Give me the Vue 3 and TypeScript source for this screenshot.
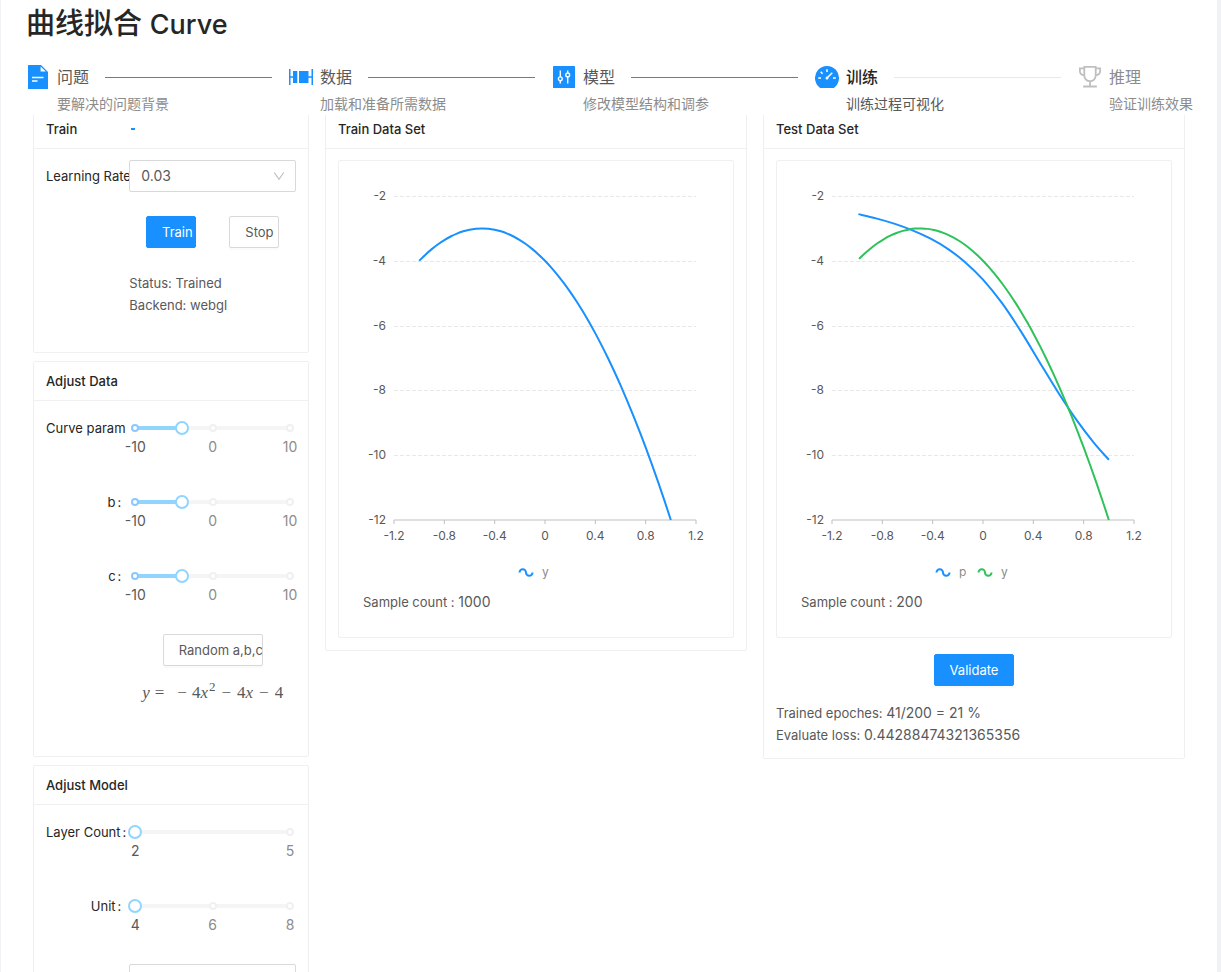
<script setup lang="ts">
import { ref } from 'vue'

type StepState = 'done' | 'active' | 'wait'
interface Step { icon: string; title: string; desc: string; state: StepState }
interface Mark { value: number; label: string }
interface SliderDef { id: string; label: string; min: number; max: number; value: number; colon: boolean; marks: Mark[] }
type Point = [number, number]
interface Series { name: string; color: string; path: string }

const steps: Step[] = [
  { icon: 'file', title: '问题', desc: '要解决的问题背景', state: 'done' },
  { icon: 'data', title: '数据', desc: '加载和准备所需数据', state: 'done' },
  { icon: 'model', title: '模型', desc: '修改模型结构和调参', state: 'done' },
  { icon: 'gauge', title: '训练', desc: '训练过程可视化', state: 'active' },
  { icon: 'trophy', title: '推理', desc: '验证训练效果', state: 'wait' },
]

const learningRate = ref('0.03')
const activation = ref('sigmoid')

const curveMarks: Mark[] = [
  { value: -10, label: '-10' },
  { value: 0, label: '0' },
  { value: 10, label: '10' },
]
const curveSliders = ref<SliderDef[]>([
  { id: 'param-a', label: 'Curve param a', min: -10, max: 10, value: -4, colon: false, marks: curveMarks },
  { id: 'param-b', label: 'b', min: -10, max: 10, value: -4, colon: true, marks: curveMarks },
  { id: 'param-c', label: 'c', min: -10, max: 10, value: -4, colon: true, marks: curveMarks },
])
const modelSliders = ref<SliderDef[]>([
  { id: 'layers', label: 'Layer Count', min: 2, max: 5, value: 2, colon: true, marks: [{ value: 2, label: '2' }, { value: 5, label: '5' }] },
  { id: 'units', label: 'Unit', min: 4, max: 8, value: 4, colon: true, marks: [{ value: 4, label: '4' }, { value: 6, label: '6' }, { value: 8, label: '8' }] },
])
const percent = (s: SliderDef, v: number): string => `${((v - s.min) / (s.max - s.min)) * 100}%`

const X0 = 31
const X1 = 333
const Y0 = 11
const Y1 = 335
const px = (x: number): number => X0 + ((x + 1.2) / 2.4) * (X1 - X0)
const py = (y: number): number => Y0 + ((-2 - y) / 10) * (Y1 - Y0)
const yTicks = [-2, -4, -6, -8, -10, -12]
const xTicks = [-1.2, -0.8, -0.4, 0, 0.4, 0.8, 1.2]

function smooth(pts: Point[]): string {
  let d = `M${pts[0][0]} ${pts[0][1]}`
  for (let i = 0; i < pts.length - 1; i++) {
    const a = pts[Math.max(i - 1, 0)]
    const b = pts[i]
    const c = pts[i + 1]
    const e = pts[Math.min(i + 2, pts.length - 1)]
    d += `C${b[0] + (c[0] - a[0]) / 6} ${b[1] + (c[1] - a[1]) / 6} ${c[0] - (e[0] - b[0]) / 6} ${c[1] - (e[1] - b[1]) / 6} ${c[0]} ${c[1]}`
  }
  return d
}
function quadratic(from: number): string {
  const pts: Point[] = []
  for (let i = 0; i <= 40; i++) {
    const x = from + ((1 - from) * i) / 40
    pts.push([px(x), py(-4 * x * x - 4 * x - 4)])
  }
  return smooth(pts)
}
const predicted: Point[] = [
  [-0.99, -2.56], [-0.85, -2.69], [-0.7, -2.86], [-0.56, -3.06], [-0.42, -3.31], [-0.28, -3.63], [-0.14, -4.05], [0, -4.58],
  [0.15, -5.3], [0.3, -6.17], [0.45, -7.13], [0.6, -8.08], [0.75, -8.95], [0.88, -9.61], [1, -10.14],
]
const trainSeries: Series[] = [{ name: 'y', color: '#1890ff', path: quadratic(-1) }]
const testSeries: Series[] = [
  { name: 'p', color: '#1890ff', path: smooth(predicted.map(([x, y]): Point => [px(x), py(y)])) },
  { name: 'y', color: '#2fc25b', path: quadratic(-0.985) },
]
const charts = [
  { title: 'Train Data Set', series: trainSeries, count: 1000, test: false },
  { title: 'Test Data Set', series: testSeries, count: 200, test: true },
]
</script>

<template>
  <div class="app">
    <main class="page">
      <header class="top">
        <h1>曲线拟合 <span class="latin">Curve</span></h1>
        <ol class="steps">
          <li v-for="s in steps" :key="s.icon" class="step" :class="s.state">
            <svg class="step-icon" viewBox="0 0 24 24" aria-hidden="true">
              <template v-if="s.icon === 'file'">
                <path d="M2 .6Q2 0 2.600 0H15L22 7V23.400Q22 24 21.400 24H2.600Q2 24 2 23.400Z" fill="#1890ff" />
                <path d="M14.600 1.600V6.500H19.800Z" fill="#fff" />
                <path d="M6 12.500H17.500M6 16H11.500" stroke="#fff" stroke-width="1.500" />
              </template>
              <template v-else-if="s.icon === 'data'">
                <path d="M.75 4V20M23.250 4V20M1 12H4.500M19 12H23" stroke="#1890ff" stroke-width="1.500" />
                <path d="M4 6H8.300V18H4ZM10 6H19.500V18H10Z" fill="#1890ff" />
              </template>
              <template v-else-if="s.icon === 'model'">
                <rect x="1" y="1" width="22" height="22" rx=".6" fill="#1890ff" />
                <path d="M8.300 5.500V12M8.300 15.500V18.500M15.700 5.500V8M15.700 11.500V18.500" stroke="#fff" stroke-width="1.400" />
                <circle cx="8.300" cy="13.800" r="1.900" fill="none" stroke="#fff" stroke-width="1.400" />
                <circle cx="15.700" cy="9.900" r="1.900" fill="none" stroke="#fff" stroke-width="1.400" />
              </template>
              <template v-else-if="s.icon === 'gauge'">
                <path d="M4.600 22.400A12 12 0 1 1 19.400 22.400Q18.900 22.900 18.200 22.900H5.800Q5.100 22.900 4.600 22.400Z" fill="#1890ff" />
                <path d="M3.200 13H6M18 13H20.800M5.700 6.800L7.600 8.700M12 4.200V7M12 13L17.300 7.700" stroke="#fff" stroke-width="1.500" />
                <circle cx="12" cy="13" r="1.500" fill="#fff" />
              </template>
              <template v-else>
                <path d="M6.300 1.800H17.700V10.500A5.700 5.700 0 0 1 6.300 10.500ZM6 3.300H1.900V6.500A4 4 0 0 0 6.300 10.200M18 3.300H22.100V6.500A4 4 0 0 1 17.700 10.200M12 16.500V21M5.200 21.500H18.800" fill="none" stroke="#bfbfbf" stroke-width="1.800" />
              </template>
            </svg>
            <div class="step-text">
              <div class="step-title">{{ s.title }}</div>
              <div class="step-desc">{{ s.desc }}</div>
            </div>
          </li>
        </ol>
      </header>

      <div class="content">
        <div class="col side">
          <section class="card">
            <h2 class="card-head">Train<span class="ink"></span></h2>
            <div class="card-body">
              <div class="item">
                <label class="label" for="rate">Learning Rate</label>
                <div class="select">
                  <select id="rate" v-model="learningRate">
                    <option>0.01</option>
                    <option>0.03</option>
                    <option>0.1</option>
                  </select>
                  <svg viewBox="0 0 12 12" aria-hidden="true"><path d="M1.200 2.500L6 9.300L10.800 2.500" fill="none" stroke="#bfbfbf" stroke-width="1.200" /></svg>
                </div>
              </div>
              <div class="item">
                <div class="control pair">
                  <button type="button" class="btn primary short">Train</button>
                  <button type="button" class="btn short">Stop</button>
                </div>
              </div>
              <div class="item">
                <div class="control">
                  <div>Status: Trained</div>
                  <div>Backend: webgl</div>
                </div>
              </div>
            </div>
          </section>

          <section class="card">
            <h2 class="card-head">Adjust Data</h2>
            <div class="card-body">
              <div v-for="s in curveSliders" :key="s.id" class="item">
                <label class="label" :for="s.id">{{ s.label }}<span v-if="s.colon" class="colon">:</span></label>
                <div class="slider">
                  <div class="rail">
                    <div class="track" :style="{ width: percent(s, s.value) }"></div>
                    <span v-for="m in s.marks" :key="m.value" class="dot" :class="{ on: m.value <= s.value }" :style="{ left: percent(s, m.value) }"></span>
                    <input :id="s.id" v-model.number="s.value" type="range" :min="s.min" :max="s.max" />
                    <span v-for="m in s.marks" :key="m.label" class="mark" :class="{ on: m.value <= s.value }" :style="{ left: percent(s, m.value) }">{{ m.label }}</span>
                  </div>
                </div>
              </div>
              <div class="item">
                <div class="control centered">
                  <button type="button" class="btn random">Random a,b,c</button>
                  <div class="formula"><i>y</i><span class="rel">=</span><span class="neg">−</span>4<i>x</i><sup>2</sup><span class="op">−</span>4<i>x</i><span class="op">−</span>4</div>
                </div>
              </div>
            </div>
          </section>

          <section class="card">
            <h2 class="card-head">Adjust Model</h2>
            <div class="card-body">
              <div v-for="s in modelSliders" :key="s.id" class="item">
                <label class="label" :for="s.id">{{ s.label }}<span class="colon">:</span></label>
                <div class="slider">
                  <div class="rail">
                    <div class="track" :style="{ width: percent(s, s.value) }"></div>
                    <span v-for="m in s.marks" :key="m.value" class="dot" :class="{ on: m.value <= s.value }" :style="{ left: percent(s, m.value) }"></span>
                    <input :id="s.id" v-model.number="s.value" type="range" :min="s.min" :max="s.max" />
                    <span v-for="m in s.marks" :key="m.label" class="mark" :class="{ on: m.value <= s.value }" :style="{ left: percent(s, m.value) }">{{ m.label }}</span>
                  </div>
                </div>
              </div>
              <div class="item">
                <div class="select control">
                  <select v-model="activation" aria-label="Activation">
                    <option>sigmoid</option>
                    <option>relu</option>
                  </select>
                </div>
              </div>
            </div>
          </section>
        </div>

        <div v-for="c in charts" :key="c.title" class="col wide">
          <section class="card">
            <h2 class="card-head">{{ c.title }}</h2>
            <div class="card-body">
              <div class="inner">
                <svg class="chart" viewBox="0 0 346 406" role="img" :aria-label="c.title">
                  <g v-for="t in yTicks" :key="t">
                    <line v-if="t > -12" :x1="X0" :x2="X1" :y1="Math.round(py(t)) + 0.5" :y2="Math.round(py(t)) + 0.5" stroke="#e8e8e8" stroke-dasharray="4 2" />
                    <text :x="X0 - 8" :y="py(t) + 4" text-anchor="end">{{ t }}</text>
                  </g>
                  <line :x1="X0" :x2="X1" :y1="Y1" :y2="Y1" stroke="#bfbfbf" />
                  <g v-for="t in xTicks" :key="t">
                    <line :x1="px(t)" :x2="px(t)" :y1="Y1" :y2="Y1 + 4" stroke="#bfbfbf" />
                    <text :x="px(t)" :y="Y1 + 20" text-anchor="middle">{{ t }}</text>
                  </g>
                  <path v-for="s in c.series" :key="s.name" :d="s.path" fill="none" :stroke="s.color" stroke-width="2" />
                  <g v-for="(s, i) in c.series" :key="s.name" :transform="`translate(${163 + (i * 2 - (c.series.length - 1)) * 21} 387)`">
                    <path d="M-6.500 .5A3.200 3.200 0 0 1 0 .5A3.200 3.200 0 0 0 6.500 .5" fill="none" :stroke="s.color" stroke-width="2" />
                    <text class="legend" x="16" y="4">{{ s.name }}</text>
                  </g>
                </svg>
                <div>Sample count : <span class="num">{{ c.count }}</span></div>
              </div>
              <template v-if="c.test">
                <button type="button" class="btn primary validate">Validate</button>
                <div>Trained epoches: <span class="num">41/200 = 21 %</span></div>
                <div>Evaluate loss: <span class="num">0.44288474321365356</span></div>
              </template>
            </div>
          </section>
        </div>
      </div>
    </main>
  </div>
</template>

<style>
body {
  margin: 0;
  background: #f0f2f5;
}
</style>

<style scoped>
* {
  box-sizing: border-box;
}
.app {
  height: 100vh;
  padding: 0 4px 0 1px;
  background: #f0f2f5;
  color: #595959;
  font: 13px/22px Inter, "Noto Sans CJK SC", sans-serif;
}
.page {
  display: flex;
  flex-direction: column;
  height: 100%;
  background: #fff;
}
.top {
  position: relative;
  z-index: 1;
  flex: none;
  padding: 4px 24px 0 25px;
  background: #fff;
}
h1 {
  height: 40px;
  margin: 0 0 17px;
  color: #262626;
  font-size: 29px;
  font-weight: 500;
  line-height: 40px;
}
.latin {
  font-size: 27px;
}
.steps {
  display: flex;
  margin: 0;
  padding: 0;
  list-style: none;
}
.step {
  display: flex;
  flex: 1;
  min-width: 0;
  gap: 7px;
}
.step:last-child {
  flex: none;
}
.step-icon {
  flex: none;
  width: 24px;
  height: 24px;
  margin-top: 4px;
}
.step-text {
  flex: 1;
  min-width: 0;
  white-space: nowrap;
}
.step-title {
  display: flex;
  align-items: center;
  gap: 16px;
  padding-right: 17px;
  font-size: 16px;
  line-height: 32px;
}
.step:not(:last-child) .step-title::after {
  flex: 1;
  height: 1px;
  background: #1890ff;
  content: "";
}
.step.active:not(:last-child) .step-title::after {
  background: #e8e8e8;
}
.step-desc {
  color: #8c8c8c;
  font-size: 14px;
}
.active .step-title {
  color: #262626;
  font-weight: 500;
}
.active .step-desc {
  color: #595959;
}
.wait .step-title {
  color: #8c8c8c;
}
.content {
  display: flex;
  flex: 1;
  min-height: 0;
  align-items: flex-start;
  margin-top: -6px;
  padding: 0 24px;
  overflow: auto;
  scrollbar-width: none;
}
.col {
  flex: none;
  padding: 0 8px;
}
.side {
  width: 25%;
}
.wide {
  width: 37.5%;
}
.card {
  margin-bottom: 8px;
  border: 1px solid #f0f0f0;
  border-radius: 2px;
}
.card-head {
  display: grid;
  grid-template-columns: 1fr 2fr;
  align-items: center;
  margin: 0;
  padding: 0 12px;
  border-bottom: 1px solid #f0f0f0;
  color: #262626;
  font-size: 13px;
  font-weight: 500;
  line-height: 38px;
  white-space: nowrap;
}
.ink {
  width: 4px;
  height: 2px;
  margin-left: 2px;
  background: #1890ff;
}
.card-body {
  padding: 11px 12px 12px;
}
.item {
  display: grid;
  grid-template-columns: minmax(0, 1fr) minmax(0, 2fr);
  margin-bottom: 24px;
}
.label {
  overflow: hidden;
  color: #262626;
  line-height: 32px;
  text-align: right;
  white-space: nowrap;
}
.colon {
  margin: 0 8px 0 2px;
}
.num {
  font-size: 14px;
}
.control {
  grid-column: 2;
}
.pair {
  display: grid;
  grid-template-columns: 1fr 1fr;
  justify-items: center;
}
.centered {
  display: flex;
  flex-direction: column;
  align-items: center;
}
.select {
  position: relative;
}
.select select {
  display: block;
  width: 100%;
  height: 32px;
  padding: 0 11px;
  appearance: none;
  border: 1px solid #d9d9d9;
  border-radius: 2px;
  background: #fff;
  color: #595959;
  font: inherit;
  font-size: 14px;
}
.select svg {
  position: absolute;
  top: 10px;
  right: 11px;
  width: 12px;
  height: 12px;
  pointer-events: none;
}
.btn {
  display: block;
  height: 32px;
  padding: 0 0 0 15px;
  overflow: hidden;
  border: 1px solid #d9d9d9;
  border-radius: 2px;
  background: #fff;
  box-shadow: 0 2px 0 rgba(0, 0, 0, 0.02);
  color: #595959;
  font: inherit;
  text-align: left;
  white-space: nowrap;
}
.primary {
  border-color: #1890ff;
  background: #1890ff;
  color: #fff;
}
.short {
  width: 50px;
}
.random {
  width: 100px;
}
.validate {
  margin: 16px auto;
  padding: 0 15px;
}
.slider {
  height: 50px;
  padding: 14px 6px 0;
}
.rail {
  position: relative;
  height: 4px;
  border-radius: 2px;
  background: #f5f5f5;
}
.track {
  height: 4px;
  border-radius: 2px;
  background: #91d5ff;
}
.dot {
  position: absolute;
  top: -2px;
  width: 8px;
  height: 8px;
  margin-left: -4px;
  border: 2px solid #f0f0f0;
  border-radius: 50%;
  background: #fff;
}
.dot.on {
  border-color: #8cc8ff;
}
.rail input {
  position: absolute;
  top: -5px;
  left: -7px;
  width: calc(100% + 14px);
  height: 14px;
  margin: 0;
  appearance: none;
  background: transparent;
}
.rail input::-webkit-slider-thumb {
  box-sizing: border-box;
  width: 14px;
  height: 14px;
  appearance: none;
  border: 2px solid #91d5ff;
  border-radius: 50%;
  background: #fff;
}
.mark {
  position: absolute;
  top: 10px;
  color: #8c8c8c;
  font-size: 14px;
  transform: translateX(-50%);
}
.mark.on {
  color: #595959;
}
.formula {
  font-family: "Liberation Serif", serif;
  font-size: 17px;
  line-height: 54px;
  white-space: nowrap;
}
.formula sup {
  margin-left: 1px;
  font-size: 13px;
  line-height: 0;
  vertical-align: 7px;
}
.rel {
  margin: 0 5px;
}
.neg {
  margin: 0 5px 0 8px;
}
.op {
  margin: 0 6px;
}
.inner {
  padding: 24px;
  border: 1px solid #f0f0f0;
  border-radius: 2px;
}
.chart {
  display: block;
  width: 100%;
}
.chart text {
  fill: #595959;
  font-size: 12px;
}
.chart .legend {
  fill: #8c8c8c;
}
</style>
